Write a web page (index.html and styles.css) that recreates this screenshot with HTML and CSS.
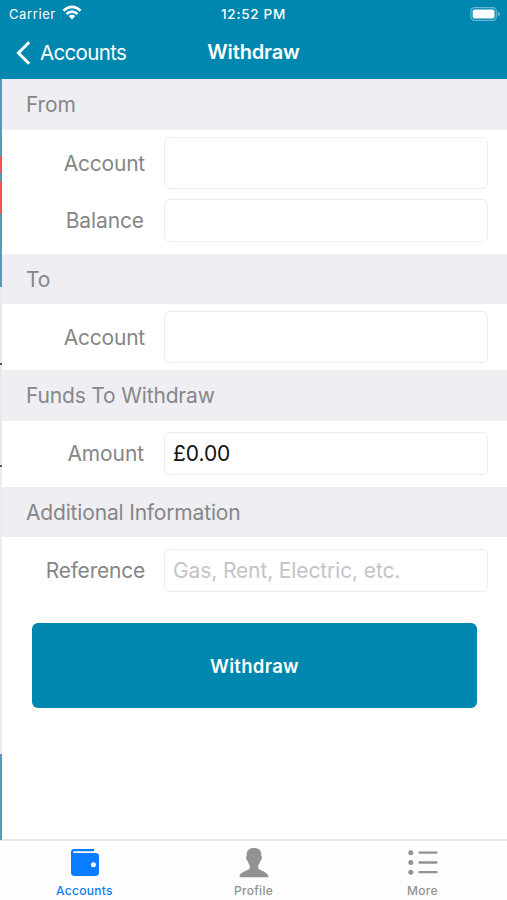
FILE: index.html
```html
<!DOCTYPE html>
<html lang="en">
<head>
<meta charset="utf-8">
<title>Withdraw</title>
<link rel="stylesheet" href="styles.css">
</head>
<body>
<div class="screen">
  <header class="top">
    <div class="status">
      <div class="carrier"><span class="carrier-name">Carrier</span>
        <svg class="wifi" width="20" height="15" viewBox="0 0 20 15" fill="none" stroke="#fff" stroke-width="2.6"><path d="M1.5 5.7Q10-1.9 18.5 5.7M4.5 9Q10 4.2 15.5 9"/><path d="M6.7 11.1Q10 8.2 13.3 11.1L10 14.5Z" fill="#fff" stroke="none"/></svg>
      </div>
      <time class="clock">12:52 PM</time>
      <svg class="battery" width="31" height="14" viewBox="0 0 31 14"><rect x=".9" y=".7" width="25.4" height="12.6" rx="3.6" fill="none" stroke="#67b8d0" stroke-width="1.2"/><rect x="2.7" y="2.4" width="21.8" height="9.2" rx="1.8" fill="#fff"/><path d="M27.8 4.6Q30 5.3 30 7T27.8 9.4Z" fill="#67b8d0"/></svg>
    </div>
    <nav class="nav">
      <a class="back"><svg width="15" height="24" viewBox="0 0 15 24" fill="none" stroke="#fff" stroke-width="3"><path d="M13.2 1.2L2.4 12l10.8 10.8"/></svg><span class="back-text">Accounts</span></a>
      <h1 class="title">Withdraw</h1>
    </nav>
  </header>
  <main class="content">
    <h2 class="section">From</h2>
    <div class="row tall first"><label>Account</label><div class="field"></div></div>
    <div class="row second"><label class="inset">Balance</label><div class="field"></div></div>
    <h2 class="section">To</h2>
    <div class="row tall"><label>Account</label><div class="field"></div></div>
    <h2 class="section">Funds To Withdraw</h2>
    <div class="row"><label class="inset">Amount</label><div class="field"><span class="amount">£0.00</span></div></div>
    <h2 class="section">Additional Information</h2>
    <div class="row"><label>Reference</label><div class="field"><span class="placeholder">Gas, Rent, Electric, etc.</span></div></div>
    <button class="submit">Withdraw</button>
  </main>
  <footer class="tabs">
    <a class="tab active">
      <svg width="30" height="30" viewBox="0 0 30 30"><path d="M4 1H24V3.3H4.2Q3 3.3 3 4.2T4.2 5H25.5Q29 5 29 8.2V24.6Q29 28 25.5 28H4.5Q1 28 1 24.6V4.4Q1 1 4 1Z" fill="#0a7cff"/><circle cx="23.4" cy="16.8" r="2.5" fill="#fff"/></svg>
      <span class="tab-accounts">Accounts</span>
    </a>
    <a class="tab">
      <svg width="30" height="30" viewBox="0 0 30 30" fill="#929292"><path d="M15 0C20.2 0 22.8 3.2 22.3 8C23.6 8.6 22.8 12 21.5 12.6C21 15.2 19.8 16.6 19.2 17.6V20C19.8 23.3 29 22.4 29.6 29.3H.4C1 22.4 10.2 23.3 10.8 20V17.6C10.2 16.6 9 15.2 8.5 12.6C7.2 12 6.4 8.6 7.7 8C7.2 3.2 9.8 0 15 0Z"/></svg>
      <span>Profile</span>
    </a>
    <a class="tab">
      <svg width="30" height="30" viewBox="0 0 30 30" fill="none" stroke="#929292" stroke-width="2.3" stroke-linecap="round"><path d="M11.5 4.7H28.5M11.5 14.5H28.5M11.5 24.2H28.5"/><g fill="#929292" stroke="none"><circle cx="2.8" cy="4.7" r="2.5"/><circle cx="2.8" cy="14.5" r="2.5"/><circle cx="2.8" cy="24.2" r="2.5"/></g></svg>
      <span>More</span>
    </a>
  </footer>
  <div class="edge"></div>
</div>
</body>
</html>
```
FILE: styles.css
```css
* { box-sizing: border-box; }
body { margin: 0; background: #fff; font-family: Inter, "Liberation Sans", sans-serif; }
.screen { position: relative; display: flex; flex-direction: column; width: 507px; height: 900px; overflow: hidden; }
.top { height: 79px; background: #0087af; color: #fff; }
.status { display: grid; grid-template-columns: 1fr auto 1fr; align-items: center; height: 27px; padding: 0 6px 0 9px; }
.carrier { display: flex; align-items: center; gap: 6px; font-size: 13px; letter-spacing: .6px; }
.carrier-name { width: 47px; }
.wifi { margin-top: -2px; }
.clock { font-size: 13.5px; font-weight: 500; letter-spacing: .7px; margin-right: 3px; }
.battery { justify-self: end; }
.nav { display: grid; grid-template-columns: 1fr auto 1fr; align-items: center; height: 51px; padding: 0 16px; }
.back { display: flex; align-items: center; gap: 9px; font-size: 20.5px; letter-spacing: -.65px; }
.back-text { position: relative; top: -.5px; }
.title { margin: -1px 0 0; font-size: 20px; font-weight: 600; letter-spacing: -.15px; }
.content { flex: 1; padding-left: 2px; }
.section { display: flex; align-items: center; height: 50.5px; margin: 0; padding: 1px 0 0 24px; background: #efeef3; color: #86868a; font-size: 21px; font-weight: 400; letter-spacing: -.17px; }
.row { display: grid; grid-template-columns: 143px 324px; column-gap: 19px; align-items: center; height: 66px; }
.row label { text-align: right; color: #868686; font-size: 21px; letter-spacing: -.22px; }
.row .inset { padding-right: 1px; letter-spacing: -.1px; }
.field { display: flex; align-items: center; height: 43px; padding-left: 8px; border: 1px solid #ededed; border-radius: 6px; font-size: 21px; letter-spacing: -.05px; white-space: nowrap; }
.tall .field { height: 52px; }
.first { height: 67px; }
.second { height: 57px; padding-bottom: 9px; }
.amount { color: #111; }
.placeholder { color: #c4c4c6; letter-spacing: -.12px; }
.submit { display: flex; align-items: center; justify-content: center; width: 445px; height: 85px; margin: 20px 0 0 30px; padding: 0; border: 0; border-radius: 6px; background: #0087af; color: #fff; font: 600 18.5px Inter, "Liberation Sans", sans-serif; letter-spacing: .3px; }
.tabs { display: grid; grid-template-columns: repeat(3, 1fr); height: 61px; border-top: 2px solid #e8e8e8; background: #fdfdfd; }
.tab { display: flex; flex-direction: column; align-items: center; padding-top: 7px; gap: 5px; color: #929292; font-size: 12px; font-weight: 500; line-height: 15px; letter-spacing: .3px; }
.active { color: #0a7cff; }
/* Sliver of the previous screen along the left side */
.edge { position: absolute; left: 0; top: 79px; width: 2px; height: 761px; background: linear-gradient(#4d9fb9 0 77px, #f05353 77px 94px, #4d9fb9 94px 102px, #f05353 102px 135px, #4d9fb9 135px 208px, #e9e9ec 208px 284px, #555 284px 286px, #e9e9ec 286px 386px, #555 386px 388px, #ececec 388px 675px, #4d9fb9 675px); }
```
